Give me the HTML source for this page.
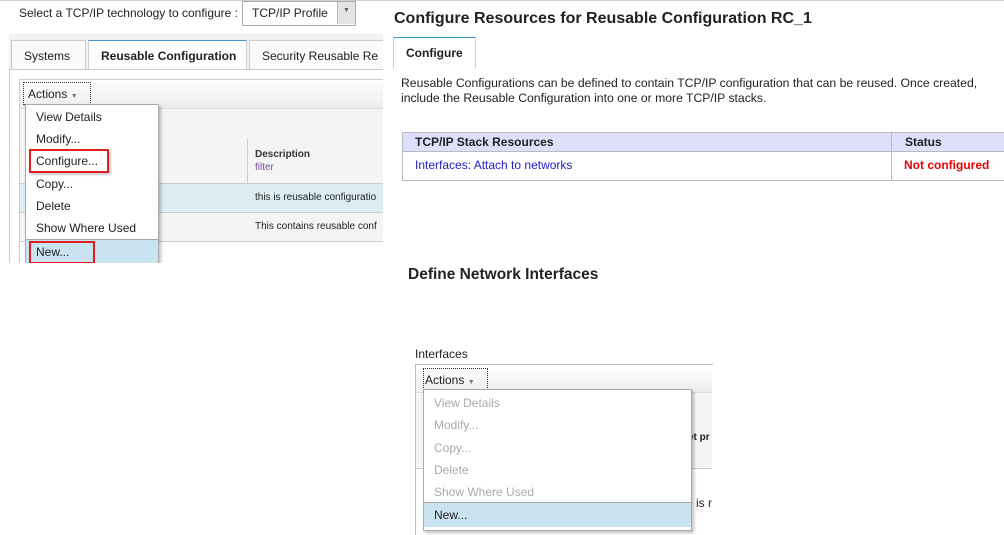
<!DOCTYPE html>
<html><head><style>
body{margin:0;width:1004px;height:527px;background:#fff;position:relative;overflow:hidden;font-family:"Liberation Sans",Arial,sans-serif;font-size:12px;color:#222}
.a{position:absolute;white-space:nowrap}
.mi{position:absolute;left:10px;font-size:12px}
#L{position:absolute;left:0;top:0;width:383px;height:263px;overflow:hidden}
</style></head><body>
<div class="a" style="left:0;top:0;width:1004px;height:1px;background:#c8d0dc"></div>
<div id="L">
<div class="a" style="left:19px;top:6px">Select a TCP/IP technology to configure :</div>
<div class="a" style="left:242px;top:1px;width:112px;height:23px;border:1px solid #aaa;background:#fff"></div>
<div class="a" style="left:252px;top:6px;font-size:12px">TCP/IP Profile</div>
<div class="a" style="left:337px;top:2px;width:17px;height:22px;background:#e4e4e4;border-left:1px solid #bbb"></div>
<div class="a" style="left:343px;top:7px;font-size:7px;color:#666">▼</div>
<div class="a" style="left:9px;top:34px;width:374px;height:35px;background:#f2f2f2"></div>
<div class="a" style="left:11px;top:40px;width:73px;height:29px;border:1px solid #ccc;border-bottom:none;background:#fafafa"></div>
<div class="a" style="left:24px;top:49px">Systems</div>
<div class="a" style="left:88px;top:40px;width:157px;height:30px;border:1px solid #ccc;border-top:1px solid #3a9bd0;border-bottom:none;background:#fff"></div>
<div class="a" style="left:101px;top:49px;font-weight:bold">Reusable Configuration</div>
<div class="a" style="left:249px;top:40px;width:140px;height:29px;border:1px solid #ccc;border-bottom:none;background:#fafafa"></div>
<div class="a" style="left:262px;top:49px">Security Reusable Re</div>
<div class="a" style="left:9px;top:69px;width:380px;height:200px;border-left:1px solid #ccc;border-top:1px solid #ccc;background:#fff"></div>
<div class="a" style="left:19px;top:79px;width:370px;height:190px;border-left:1px solid #ccc;border-top:1px solid #ccc"></div>
<div class="a" style="left:20px;top:80px;width:370px;height:28px;background:linear-gradient(#fff,#ececec)"></div>
<div class="a" style="left:20px;top:108px;width:370px;height:30px;background:#f4f4f4;border-top:1px solid #ddd;border-bottom:1px solid #ccc"></div>
<div class="a" style="left:20px;top:139px;width:370px;height:44px;background:#f4f4f4;border-bottom:1px solid #ccc"></div>
<div class="a" style="left:247px;top:139px;width:1px;height:102px;background:#ccc"></div>
<div class="a" style="left:255px;top:149px;font-size:10px;font-weight:bold;color:#333">Description</div>
<div class="a" style="left:255px;top:162px;font-size:10px;color:#7b4aa0">filter</div>
<div class="a" style="left:20px;top:184px;width:370px;height:28px;background:#dcedf4;border-bottom:1px solid #ccc"></div>
<div class="a" style="left:20px;top:213px;width:370px;height:28px;background:#f4f4f4;border-bottom:1px solid #ccc"></div>
<div class="a" style="left:255px;top:192px;font-size:10px">this is reusable configuratio</div>
<div class="a" style="left:255px;top:221px;font-size:10px">This contains reusable conf</div>
<div class="a" style="left:23px;top:82px;width:66px;height:21px;border:1px dotted #333"></div>
<div class="a" style="left:28px;top:87px">Actions <span style="font-size:7px;color:#777">▼</span></div>
<div class="a" style="left:25px;top:104px;width:132px;height:160px;border:1px solid #aaa;background:#fff;box-shadow:2px 2px 3px rgba(0,0,0,.25)">
<div class="mi" style="top:5px">View Details</div>
<div class="mi" style="top:27px">Modify...</div>
<div class="mi" style="top:49px">Configure...</div>
<div class="mi" style="top:72px">Copy...</div>
<div class="mi" style="top:94px">Delete</div>
<div class="mi" style="top:116px">Show Where Used</div>
<div style="position:absolute;left:0;top:134px;width:132px;height:26px;background:#c9e4f0;border-top:1px solid #aaa"></div>
<div class="mi" style="top:140px">New...</div>
</div>
<div class="a" style="left:29px;top:149px;width:80px;height:24px;border:2px solid #e02020;box-sizing:border-box;box-shadow:2px 2px 2px rgba(0,0,0,.2)"></div>
<div class="a" style="left:29px;top:241px;width:66px;height:23px;border:2px solid #e02020;box-sizing:border-box"></div>
</div>
<!-- RIGHT -->
<div class="a" style="left:394px;top:10px;font-size:16px;font-weight:bold;color:#222">Configure Resources for Reusable Configuration RC_1</div>
<div class="a" style="left:393px;top:37px;width:81px;height:30px;border:1px solid #ccc;border-top:1px solid #3a9bd0;border-bottom:none;background:#fff"></div>
<div class="a" style="left:406px;top:46px;font-weight:bold">Configure</div>
<div class="a" style="left:401px;top:76px;line-height:15px;font-size:12.2px">Reusable Configurations can be defined to contain TCP/IP configuration that can be reused. Once created,<br>include the Reusable Configuration into one or more TCP/IP stacks.</div>
<div class="a" style="left:402px;top:132px;width:604px;height:47px;border:1px solid #bbb"></div>
<div class="a" style="left:403px;top:133px;width:602px;height:18px;background:#dedffb;border-bottom:1px solid #bbb"></div>
<div class="a" style="left:891px;top:133px;width:1px;height:47px;background:#bbb"></div>
<div class="a" style="left:415px;top:135px;font-weight:bold">TCP/IP Stack Resources</div>
<div class="a" style="left:905px;top:135px;font-weight:bold">Status</div>
<div class="a" style="left:415px;top:158px;color:#1c1ccc">Interfaces: Attach to networks</div>
<div class="a" style="left:904px;top:158px;color:#e00;font-weight:bold">Not configured</div>
<div class="a" style="left:408px;top:266px;font-size:15.5px;font-weight:bold">Define Network Interfaces</div>
<div class="a" style="left:415px;top:347px">Interfaces</div>
<div class="a" style="left:415px;top:364px;width:297px;height:170px;border-left:1px solid #bbb;border-top:1px solid #bbb"></div>
<div class="a" style="left:416px;top:365px;width:296px;height:27px;background:linear-gradient(#fff,#eee)"></div>
<div class="a" style="left:416px;top:392px;width:296px;height:29px;background:#f4f4f4;border-top:1px solid #ddd;border-bottom:1px solid #ccc"></div>
<div class="a" style="left:416px;top:422px;width:296px;height:46px;background:#f4f4f4;border-bottom:1px solid #ccc"></div>
<div class="a" style="left:688px;top:432px;font-size:10px;font-weight:bold">et pr</div>
<div class="a" style="left:686px;top:496px">e is r</div>
<div class="a" style="left:423px;top:368px;width:63px;height:20px;border:1px dotted #333"></div>
<div class="a" style="left:425px;top:373px">Actions <span style="font-size:7px;color:#777">▼</span></div>
<div class="a" style="left:423px;top:389px;width:267px;height:140px;border:1px solid #aaa;background:#fff;box-shadow:2px 2px 3px rgba(0,0,0,.25);color:#aaa">
<div class="mi" style="top:6px">View Details</div>
<div class="mi" style="top:28px">Modify...</div>
<div class="mi" style="top:51px">Copy...</div>
<div class="mi" style="top:73px">Delete</div>
<div class="mi" style="top:95px">Show Where Used</div>
<div style="position:absolute;left:0;top:112px;width:267px;height:24px;background:#c9e4f0;border-top:1px solid #aaa"></div>
<div class="mi" style="top:118px;color:#222">New...</div>
</div>
</body></html>
